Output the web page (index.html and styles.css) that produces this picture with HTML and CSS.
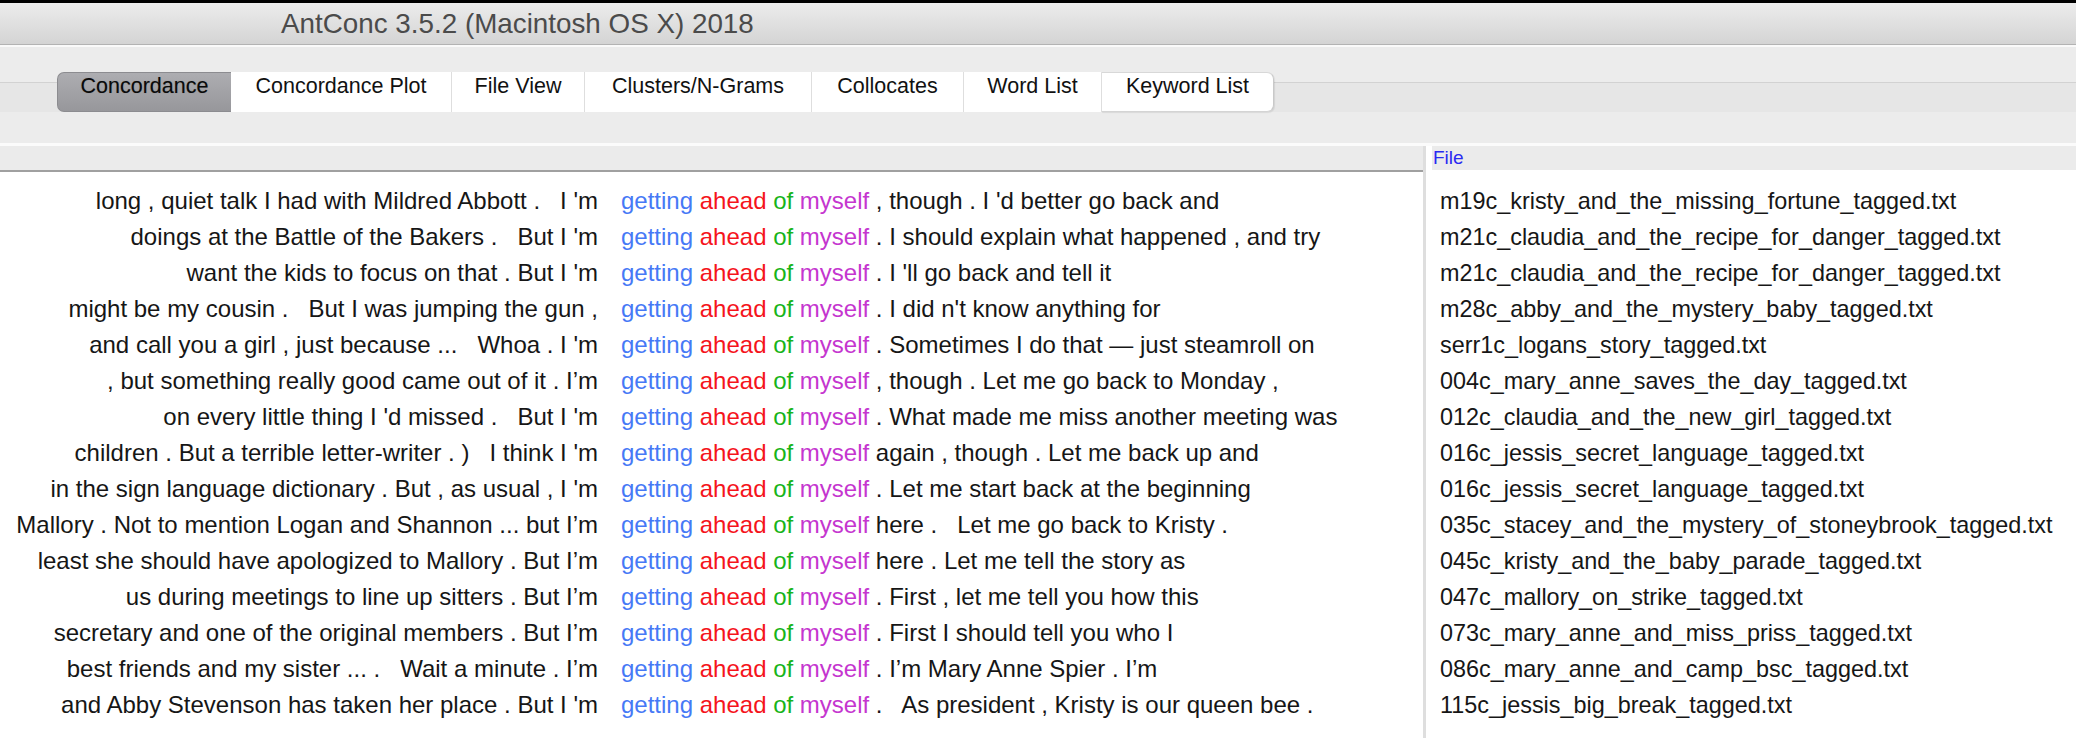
FILE: index.html
```html
<!DOCTYPE html>
<html lang="en">
<head>
<meta charset="utf-8">
<title>AntConc 3.5.2 (Macintosh OS X) 2018</title>
<link rel="stylesheet" href="styles.css">
</head>
<body>
<div class="window">
  <header class="titlebar">
    <span class="title">AntConc 3.5.2 (Macintosh OS X) 2018</span>
  </header>
  <div class="toolbar">
    <div class="tabstrip">
      <nav class="tabs">
        <div class="tab active tab-conc">Concordance</div>
        <div class="tab tab-plot">Concordance Plot</div>
        <div class="tab tab-file">File View</div>
        <div class="tab tab-clusters">Clusters/N-Grams</div>
        <div class="tab tab-colloc">Collocates</div>
        <div class="tab tab-words">Word List</div>
        <div class="tab last tab-keywords">Keyword List</div>
      </nav>
    </div>
  </div>
  <main class="main">
    <section class="leftpane">
      <div class="lefthead"></div>
      <div class="conc">
        <div class="row"><span class="lctx">long , quiet talk I had with Mildred Abbott .   I 'm</span><span class="hit"><span class="w1">getting</span> <span class="w2">ahead</span> <span class="w3">of</span> <span class="w4">myself</span> , though . I 'd better go back and</span></div>
        <div class="row"><span class="lctx">doings at the Battle of the Bakers .   But I 'm</span><span class="hit"><span class="w1">getting</span> <span class="w2">ahead</span> <span class="w3">of</span> <span class="w4">myself</span> . I should explain what happened , and try</span></div>
        <div class="row"><span class="lctx">want the kids to focus on that . But I 'm</span><span class="hit"><span class="w1">getting</span> <span class="w2">ahead</span> <span class="w3">of</span> <span class="w4">myself</span> . I 'll go back and tell it</span></div>
        <div class="row"><span class="lctx">might be my cousin .   But I was jumping the gun ,</span><span class="hit"><span class="w1">getting</span> <span class="w2">ahead</span> <span class="w3">of</span> <span class="w4">myself</span> . I did n't know anything for</span></div>
        <div class="row"><span class="lctx">and call you a girl , just because ...   Whoa . I 'm</span><span class="hit"><span class="w1">getting</span> <span class="w2">ahead</span> <span class="w3">of</span> <span class="w4">myself</span> . Sometimes I do that — just steamroll on</span></div>
        <div class="row"><span class="lctx">, but something really good came out of it . I’m</span><span class="hit"><span class="w1">getting</span> <span class="w2">ahead</span> <span class="w3">of</span> <span class="w4">myself</span> , though . Let me go back to Monday ,</span></div>
        <div class="row"><span class="lctx">on every little thing I 'd missed .   But I 'm</span><span class="hit"><span class="w1">getting</span> <span class="w2">ahead</span> <span class="w3">of</span> <span class="w4">myself</span> . What made me miss another meeting was</span></div>
        <div class="row"><span class="lctx">children . But a terrible letter-writer . )   I think I 'm</span><span class="hit"><span class="w1">getting</span> <span class="w2">ahead</span> <span class="w3">of</span> <span class="w4">myself</span> again , though . Let me back up and</span></div>
        <div class="row"><span class="lctx">in the sign language dictionary . But , as usual , I 'm</span><span class="hit"><span class="w1">getting</span> <span class="w2">ahead</span> <span class="w3">of</span> <span class="w4">myself</span> . Let me start back at the beginning</span></div>
        <div class="row"><span class="lctx">Mallory . Not to mention Logan and Shannon ... but I’m</span><span class="hit"><span class="w1">getting</span> <span class="w2">ahead</span> <span class="w3">of</span> <span class="w4">myself</span> here .   Let me go back to Kristy .</span></div>
        <div class="row"><span class="lctx">least she should have apologized to Mallory . But I’m</span><span class="hit"><span class="w1">getting</span> <span class="w2">ahead</span> <span class="w3">of</span> <span class="w4">myself</span> here . Let me tell the story as</span></div>
        <div class="row"><span class="lctx">us during meetings to line up sitters . But I’m</span><span class="hit"><span class="w1">getting</span> <span class="w2">ahead</span> <span class="w3">of</span> <span class="w4">myself</span> . First , let me tell you how this</span></div>
        <div class="row"><span class="lctx">secretary and one of the original members . But I’m</span><span class="hit"><span class="w1">getting</span> <span class="w2">ahead</span> <span class="w3">of</span> <span class="w4">myself</span> . First I should tell you who I</span></div>
        <div class="row"><span class="lctx">best friends and my sister ... .   Wait a minute . I’m</span><span class="hit"><span class="w1">getting</span> <span class="w2">ahead</span> <span class="w3">of</span> <span class="w4">myself</span> . I’m Mary Anne Spier . I’m</span></div>
        <div class="row"><span class="lctx">and Abby Stevenson has taken her place . But I 'm</span><span class="hit"><span class="w1">getting</span> <span class="w2">ahead</span> <span class="w3">of</span> <span class="w4">myself</span> .   As president , Kristy is our queen bee .</span></div>
      </div>
    </section>
    <div class="splitter"></div>
    <section class="rightpane">
      <div class="righthead"><span class="colname">File</span></div>
      <div class="files">
        <div class="file">m19c_kristy_and_the_missing_fortune_tagged.txt</div>
        <div class="file">m21c_claudia_and_the_recipe_for_danger_tagged.txt</div>
        <div class="file">m21c_claudia_and_the_recipe_for_danger_tagged.txt</div>
        <div class="file">m28c_abby_and_the_mystery_baby_tagged.txt</div>
        <div class="file">serr1c_logans_story_tagged.txt</div>
        <div class="file">004c_mary_anne_saves_the_day_tagged.txt</div>
        <div class="file">012c_claudia_and_the_new_girl_tagged.txt</div>
        <div class="file">016c_jessis_secret_language_tagged.txt</div>
        <div class="file">016c_jessis_secret_language_tagged.txt</div>
        <div class="file">035c_stacey_and_the_mystery_of_stoneybrook_tagged.txt</div>
        <div class="file">045c_kristy_and_the_baby_parade_tagged.txt</div>
        <div class="file">047c_mallory_on_strike_tagged.txt</div>
        <div class="file">073c_mary_anne_and_miss_priss_tagged.txt</div>
        <div class="file">086c_mary_anne_and_camp_bsc_tagged.txt</div>
        <div class="file">115c_jessis_big_break_tagged.txt</div>
      </div>
    </section>
  </main>
</div>
</body>
</html>
```
FILE: styles.css
```css
* { box-sizing: border-box; }
html, body {
  margin: 0;
  padding: 0;
  background: #ececec;
  font-family: "Liberation Sans", Arial, sans-serif;
}
.window {
  width: 2076px;
  height: 738px;
  overflow: hidden;
  display: flex;
  flex-direction: column;
}
.titlebar {
  height: 45px;
  border-top: 3px solid #000;
  border-bottom: 1px solid #b3b3b3;
  background: linear-gradient(#ececec, #d4d4d4);
  padding-left: 281px;
  display: flex;
  align-items: center;
}
.title {
  font-size: 27.8px;
  color: #4b4b4b;
  line-height: 41px;
  white-space: nowrap;
}
.toolbar {
  height: 101px;
  border-top: 2px solid #fafafa;
  border-bottom: 3px solid #fbfbfb;
  background: #ececec;
  padding-top: 25px;
}
.tabstrip {
  height: 40px;
  background: linear-gradient(#ececec 0, #ececec 10px, #d2d2d2 10px, #d2d2d2 11px, #e6e6e6 11px, #e6e6e6 100%);
  padding-left: 57px;
}
.tabs {
  display: flex;
  height: 40px;
}
.tab {
  flex: none;
  height: 40px;
  padding-top: 2px;
  background: #fff;
  border-left: 1px solid #dedede;
  font-size: 21.5px;
  line-height: 24px;
  color: #111;
  white-space: nowrap;
  text-align: center;
}
.tab-conc { width: 174px; }
.tab-plot { width: 220px; }
.tab-file { width: 133px; }
.tab-clusters { width: 227px; }
.tab-colloc { width: 152px; }
.tab-words { width: 138px; }
.tab-keywords { width: 173px; }
.tab.active {
  border: 1px solid #8c8c90;
  border-right: none;
  border-radius: 7px 0 0 7px;
  background: linear-gradient(#adadb1, #97979b);
  color: #0a0a0a;
  padding-top: 1px;
  text-shadow: 0 0 1px rgba(0,0,0,0.25);
}
.tab.active + .tab { border-left: none; }
.tab.last {
  border-right: 1px solid #c9c9c9;
  border-bottom: 1px solid #d4d4d4;
  border-top: 1px solid #d8d8d8;
  border-radius: 0 7px 7px 0;
  padding-top: 1px;
  box-shadow: 1px 1px 1px rgba(0,0,0,0.08);
}
.main {
  flex: 1;
  display: flex;
  background: #fff;
  min-height: 0;
}
.leftpane {
  width: 1423px;
  display: flex;
  flex-direction: column;
}
.lefthead {
  height: 26px;
  background: #ebebeb;
  border-bottom: 2px solid #a0a0a0;
}
.conc {
  padding-top: 11px;
  font-size: 24px;
  line-height: 36px;
  color: #161616;
}
.row {
  display: flex;
  height: 36px;
  white-space: pre;
}
.lctx {
  width: 598px;
  text-align: right;
  overflow: hidden;
  flex: none;
}
.hit {
  margin-left: 23px;
  overflow: hidden;
  flex: 1;
}
.w1 { color: #4679f6; }
.w2 { color: #f5141c; }
.w3 { color: #17b41b; }
.w4 { color: #c536cf; }
.splitter {
  width: 3px;
  background: #dedede;
}
.rightpane {
  flex: 1;
  display: flex;
  flex-direction: column;
  min-width: 0;
}
.righthead {
  height: 24px;
  margin-left: 6px;
  background: #ebebeb;
  padding-left: 1px;
  display: flex;
  align-items: center;
}
.colname {
  font-size: 19px;
  color: #2a2af2;
  line-height: 22px;
}
.files {
  padding-top: 13px;
  padding-left: 14px;
  font-size: 23.4px;
  line-height: 36px;
  color: #161616;
}
.file {
  height: 36px;
  white-space: nowrap;
}
```
